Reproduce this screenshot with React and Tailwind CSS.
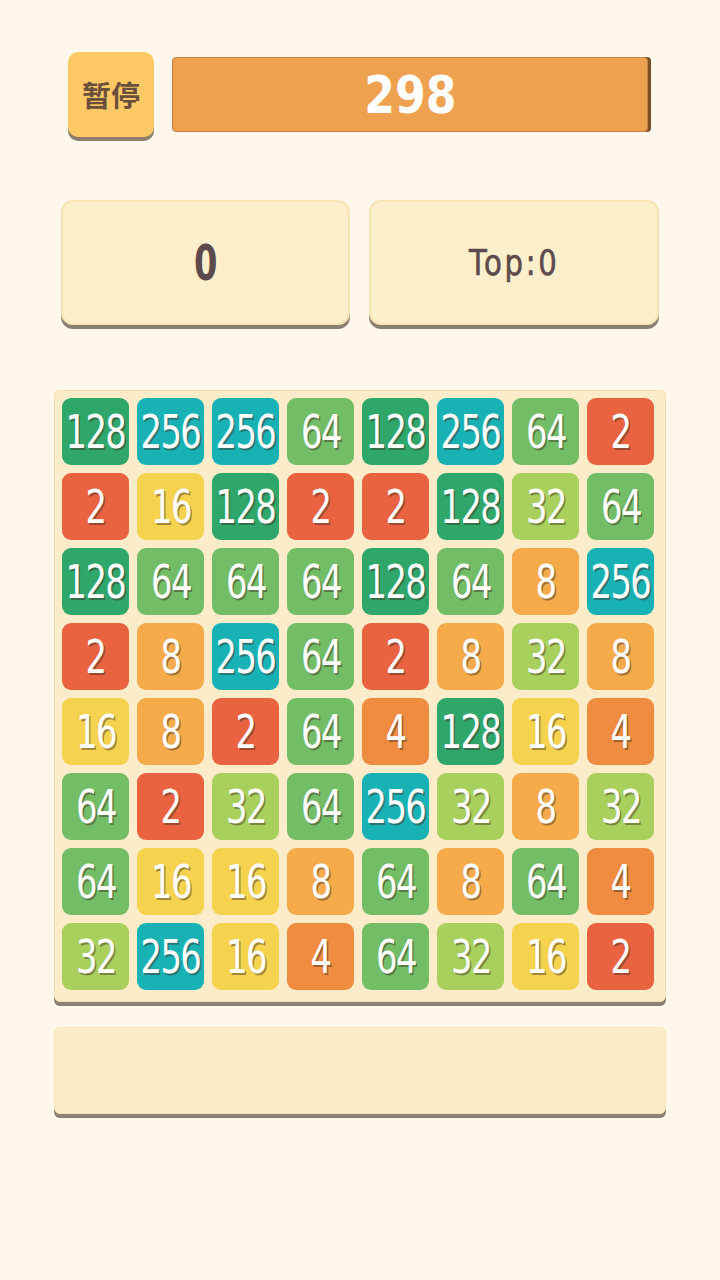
import React from "react";

const GRID = [
  [128, 256, 256, 64, 128, 256, 64, 2],
  [2, 16, 128, 2, 2, 128, 32, 64],
  [128, 64, 64, 64, 128, 64, 8, 256],
  [2, 8, 256, 64, 2, 8, 32, 8],
  [16, 8, 2, 64, 4, 128, 16, 4],
  [64, 2, 32, 64, 256, 32, 8, 32],
  [64, 16, 16, 8, 64, 8, 64, 4],
  [32, 256, 16, 4, 64, 32, 16, 2],
];

const COLORS = {
  2: "bg-[#ea6340]",
  4: "bg-[#f08c40]",
  8: "bg-[#f6ab4b]",
  16: "bg-[#f6d34f]",
  32: "bg-[#a9d05d]",
  64: "bg-[#73bd66]",
  128: "bg-[#2fa76b]",
  256: "bg-[#19b2b4]",
};

const NARROW = { fontFamily: '"DejaVu Sans Condensed", "DejaVu Sans", sans-serif' };

function Tile({ v }) {
  return (
    <div
      className={`w-[67px] h-[67px] rounded-[9px] flex items-center justify-center overflow-hidden text-white text-[47px] leading-none ${COLORS[v]}`}
      style={NARROW}
    >
      <span className="inline-block scale-x-[0.8] tracking-[-2px] [text-shadow:2px_2px_0_rgba(60,40,30,0.45)]">{v}</span>
    </div>
  );
}

export default function App() {
  return (
    <div className="w-[720px] min-h-[1280px] bg-[#fef8ec] flex flex-col">
      {/* top row */}
      <div className="flex items-center pt-[52px] pl-[68px] gap-[18px]">
        <div
          className="w-[86px] h-[85px] rounded-[10px] bg-[#fec965] shadow-[0_4px_0_#8d7f6c] flex items-center justify-center text-[#6a4f3c] text-[29px] font-bold"
          style={{ fontFamily: '"Noto Sans CJK SC", "Noto Sans", sans-serif' }}
        >
          暂停
        </div>
        <div
          className="w-[476px] h-[75px] rounded-[4px] bg-[#eea14f] border border-[#c4834a] shadow-[3px_0_0_#7a4f26] flex items-center justify-center text-white text-[52px] font-bold leading-none"
          style={{ fontFamily: '"DejaVu Sans", sans-serif' }}
        >
          <span className="inline-block scale-x-[0.85]">298</span>
        </div>
      </div>

      {/* score row */}
      <div className="flex pt-[63px] pl-[61px] gap-[19px]">
        <div
          className="w-[289px] h-[125px] rounded-[12px] bg-[#fdefcb] border-2 border-[#f8e3b5] shadow-[0_4px_0_#8a7f72] flex items-center justify-center text-[#5c4a4c] text-[50px] leading-none font-semibold"
          style={NARROW}
        >
          <span className="inline-block scale-x-[0.75]">0</span>
        </div>
        <div
          className="w-[290px] h-[125px] rounded-[12px] bg-[#fdefcb] border-2 border-[#f8e3b5] shadow-[0_4px_0_#8a7f72] flex items-center justify-center text-[#5c4a4c] text-[36px] leading-none"
          style={NARROW}
        >
          <span className="inline-block scale-x-[0.9] tracking-[3px] [-webkit-text-stroke:0.6px_#5c4a4c]">Top:0</span>
        </div>
      </div>

      {/* board */}
      <div className="pl-[54px] pt-[65px]">
        <div className="w-[612px] h-[612px] rounded-[6px] bg-[#fdecc9] border border-[#f6dfb3] shadow-[0_4px_0_#8a8074] pl-[7px] pr-[11px] pt-[7px]">
          <div className="grid grid-cols-8 gap-[8px]">
            {GRID.flat().map((v, i) => (
              <Tile key={i} v={v} />
            ))}
          </div>
        </div>
      </div>

      {/* bottom panel */}
      <div className="pl-[54px] pt-[25px]">
        <div className="w-[612px] h-[87px] rounded-[6px] bg-[#fdecc9] border border-[#f8e3b8] shadow-[0_4px_0_#8a8074]" />
      </div>
    </div>
  );
}
